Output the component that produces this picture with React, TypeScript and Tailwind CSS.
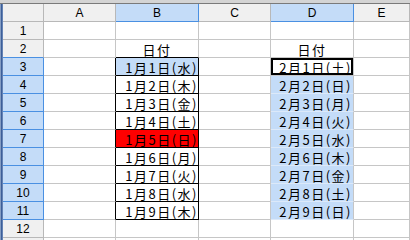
import React from 'react';

const cols = ['A', 'B', 'C', 'D', 'E'];
const selCols = ['B', 'D'];

const colB = ['1月1日(水)', '1月2日(木)', '1月3日(金)', '1月4日(土)', '1月5日(日)', '1月6日(月)', '1月7日(火)', '1月8日(水)', '1月9日(木)'];
const colD = ['2月1日(土)', '2月2日(日)', '2月3日(月)', '2月4日(火)', '2月5日(水)', '2月6日(木)', '2月7日(金)', '2月8日(土)', '2月9日(日)'];

const rows = Array.from({ length: 13 }, (_, i) => i + 1);

function Cell({ row, col }: { row: number; col: string }) {
  const inList = row >= 3 && row <= 11;
  const idx = row - 3;
  let text = '';
  let bg = 'bg-white';
  let border = 'border-r border-b border-[#c6c6c6]';
  let align = 'justify-end pr-0';
  let active = false;

  if (col === 'B') {
    if (row === 2) {
      text = '日付';
      align = 'justify-center';
      border = 'border-r border-b border-r-[#c6c6c6] border-b-black';
    }
    if (inList) {
      text = colB[idx];
      border = 'border-r border-b border-black';
      if (row === 3) bg = 'bg-[#c4dcf8]';
      if (row === 7) bg = 'bg-[#ff0000]';
    }
  }
  if (col === 'A' && inList) {
    border = 'border-r border-b border-r-black border-b-[#c6c6c6]';
  }
  if (col === 'D') {
    if (row === 2) {
      text = '日付';
      align = 'justify-center';
    }
    if (inList) {
      text = colD[idx];
      align = 'justify-end pr-[1px]';
      if (row === 3) {
        active = true;
      } else {
        bg = 'bg-[#c4dcf8]';
        border = 'border-r border-b border-r-[#c6c6c6] border-b-[#dce9f9]';
      }
    }
  }

  return (
    <div className={`relative flex items-center h-[18px] text-[13px] tracking-[1.5px] text-black ${bg} ${border} ${align}`}>
      {active && <div className="absolute inset-0 border-2 border-black" />}
      <span className="relative leading-none pt-px">{text}</span>
    </div>
  );
}

export default function App() {
  return (
    <div className="w-[410px] h-[240px] overflow-hidden bg-white flex flex-col font-['Noto_Sans_CJK_JP',sans-serif]">
      {/* top strip */}
      <div className="h-[4px] shrink-0 bg-[#d4d4d4] border-b border-[#7a7a7a]" />
      <div className="flex flex-1 min-h-0">
        {/* left window edge */}
        <div className="w-[3px] shrink-0 bg-[linear-gradient(to_right,#a9bcd8,#3d5f99,#7894c2)]" />
        <div className="grid grid-cols-[41px_72px_83px_72px_83px_1fr] auto-rows-[18px] flex-1 content-start">
          {/* header row */}
          <div className="bg-[#f0f0f0] border-r border-b border-[#b8b8b8]" />
          {cols.map((c) => {
            const sel = selCols.includes(c);
            return (
              <div
                key={c}
                className={`flex items-center justify-center text-[12px] font-['Liberation_Sans',sans-serif] text-black border-b ${
                  sel
                    ? 'bg-[#c4dcf8] border-r border-[#4a90e2]'
                    : 'bg-[#f0f0f0] border-r border-[#b8b8b8]'
                }`}
              >
                {c}
              </div>
            );
          })}

          {rows.map((r) => {
            const sel = r >= 3 && r <= 11;
            const blueBottom = r >= 2 && r <= 11;
            return (
              <React.Fragment key={r}>
                <div
                  className={`flex items-center justify-center text-[12px] font-['Liberation_Sans',sans-serif] text-black border-r border-b ${
                    sel ? 'bg-[#c4dcf8] border-r-[#4a90e2]' : 'bg-[#f0f0f0] border-r-[#b8b8b8]'
                  } ${blueBottom ? 'border-b-[#4a90e2]' : 'border-b-[#b8b8b8]'}`}
                >
                  {r <= 12 ? r : ''}
                </div>
                {cols.map((c) => (
                  <Cell key={c} row={r} col={c} />
                ))}
              </React.Fragment>
            );
          })}
        </div>
      </div>
    </div>
  );
}
